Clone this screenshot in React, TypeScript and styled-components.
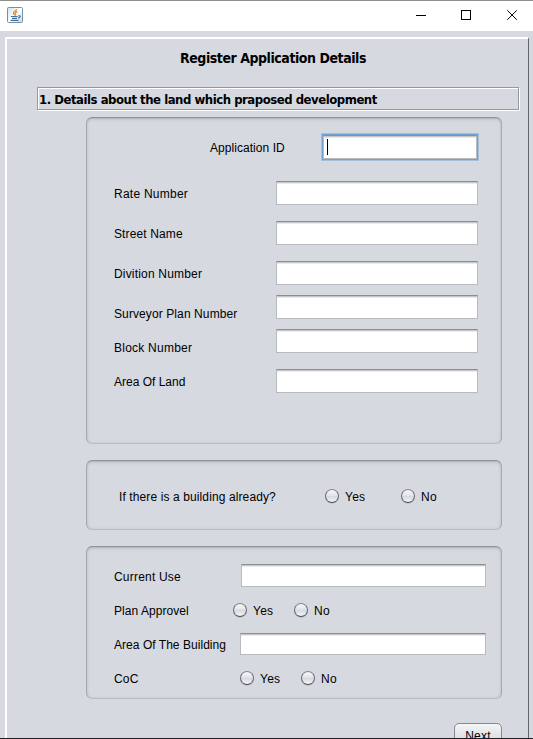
import React from "react";
import styled, { createGlobalStyle } from "styled-components";

const GlobalStyle = createGlobalStyle`
  * { box-sizing: border-box; }
  html, body { margin: 0; padding: 0; overflow: hidden; }
  body { background: #d6d9e0; }
`;

const Window = styled.div`
  width: 533px;
  height: 739px;
  display: flex;
  flex-direction: column;
  overflow: hidden;
  background: #d6d9e0;
  border-bottom: 1px solid #1c1e24;
  color: #000;
  font: 12px/14px "Liberation Sans", Arial, sans-serif;
`;

const TitleBar = styled.header`
  flex: none;
  height: 31px;
  display: flex;
  justify-content: space-between;
  background: #fff;
  border-top: 1px solid #8e8e8e;
  padding: 6px 0 0 7px;
`;

const Controls = styled.div`
  display: flex;
  gap: 35px;
  padding: 3px 15px 0 0;
  height: 14px;
`;

const Frame = styled.main`
  flex: none;
  width: 524px;
  height: 720px;
  margin: 6px 0 0 5px;
  border-top: 2px solid #fff;
  border-left: 2px solid #fff;
  border-right: 1px solid #63666c;
  display: flex;
  flex-direction: column;
`;

const Title = styled.h1`
  margin: 10px 0 0 173px;
  font: bold 14px/18px "DejaVu Sans Condensed", "DejaVu Sans", Tahoma, sans-serif;
  font-stretch: condensed;
  letter-spacing: -0.45px;
  white-space: nowrap;
`;

const SectionHeading = styled.h2`
  flex: none;
  width: 482px;
  height: 23px;
  margin: 20px 0 0 30px;
  padding: 3px 0 0 1px;
  border: 1px solid #95989d;
  box-shadow: 1px 1px 0 #fff, inset 1px 1px 0 #fff;
  font: bold 13px/17px "DejaVu Sans Condensed", "DejaVu Sans", Tahoma, sans-serif;
  font-stretch: condensed;
  letter-spacing: -0.47px;
  white-space: nowrap;
`;

const Panel = styled.section<{ $height: number; $gap: number; $pad: number }>`
  flex: none;
  width: 416px;
  height: ${(p) => p.$height}px;
  margin: ${(p) => p.$gap}px 0 0 79px;
  padding-top: ${(p) => p.$pad}px;
  border: 1px solid;
  border-color: #8f9298 #a6a9ae #b9bcc0 #a6a9ae;
  border-radius: 6px;
  box-shadow: inset 0 1px 1px #b4b7bc, inset 0 2px 3px #c6c9ce, inset 0 0 3px #c2c5ca;
`;

const Row = styled.div<{ $gap?: number; $height?: number; $indent?: number }>`
  display: flex;
  align-items: flex-start;
  height: ${(p) => p.$height ?? 24}px;
  margin-top: ${(p) => p.$gap ?? 0}px;
  padding-left: ${(p) => p.$indent ?? 27}px;
`;

const Label = styled.label<{ $width: number; $drop?: number; $track?: number }>`
  flex: none;
  width: ${(p) => p.$width}px;
  padding-top: ${(p) => p.$drop ?? 6}px;
  letter-spacing: ${(p) => p.$track ?? 0.2}px;
  white-space: nowrap;
`;

const Field = styled.input<{ $width: number; $height?: number }>`
  flex: none;
  width: ${(p) => p.$width}px;
  height: ${(p) => p.$height ?? 24}px;
  margin: 0;
  padding: 2px 2px;
  border: 1px solid;
  border-color: #8b8e93 #b7babe #b7babe;
  border-radius: 0;
  outline: none;
  background: linear-gradient(#c6c7ca 0 1px, #eaebec 1px 2px, #fff 2px);
  font: inherit;
`;

const FocusedField = styled.div`
  display: flex;
  width: 154px;
  height: 24px;
  margin-top: 1px;
  padding: 3px 0 0 3px;
  border: 1px solid;
  border-color: #8b8e93 #b7babe #b7babe;
  background: linear-gradient(#c6c7ca 0 1px, #eaebec 1px 2px, #fff 2px);
  box-shadow: 0 0 0 1px #73a4d1, 0 0 0 2px #a5bfdb;
`;

const Caret = styled.span`
  width: 1px;
  height: 16px;
  background: #000;
`;

const RadioOption = styled.label<{ $width: number }>`
  display: flex;
  align-items: flex-start;
  gap: 6px;
  width: ${(p) => p.$width}px;
  line-height: 16px;
  letter-spacing: 0.25px;
`;

const RadioDot = styled.span`
  width: 14px;
  height: 14px;
  border: 1px solid;
  border-color: #85888e #666970 #4b4e55;
  border-radius: 50%;
  background: linear-gradient(#f8f9fa, #e0e3e7 48%, #d5d9de 52%, #f4f5f7);
  box-shadow: 0 1px 0 #c3c6cb;
`;

const NextButton = styled.button`
  flex: none;
  display: flex;
  justify-content: center;
  align-items: flex-start;
  width: 48px;
  height: 26px;
  margin: 24px 0 0 447px;
  padding: 5px 0 0 0;
  border: 1px solid #85888d;
  border-radius: 5px;
  background: linear-gradient(#f4f5f6, #dfe2e6 50%, #d5d9de);
  font: 12px/14px "Liberation Sans", Arial, sans-serif;
  letter-spacing: 0.2px;
  color: #000;
`;

const JavaIcon = () => (
  <svg width="16" height="16" viewBox="0 0 16 16">
    <defs>
      <linearGradient id="tile" x1="0" y1="0" x2="1" y2="1">
        <stop offset="0" stopColor="#cfdfe9" />
        <stop offset="0.5" stopColor="#fff" />
        <stop offset="1" stopColor="#cbd9e3" />
      </linearGradient>
    </defs>
    <rect x=".5" y=".5" width="15" height="15" rx="1" fill="url(#tile)" stroke="#7590a3" />
    <path d="M9.5 2.2C9.7 4 6 4.7 6.3 6.3C6.4 7.1 7.5 7.6 7.6 8.3M10.5 4.6C8.5 5.3 7.5 6 8.5 7.1C9.1 7.8 8.7 8.2 8.4 8.5" fill="none" stroke="#ef8122" strokeWidth="1.2" />
    <path d="M4 9.5H10.6M5 11.3H10M3.6 13.3H11.6M11.2 9C14 8 13.8 10.7 11 11.2" fill="none" stroke="#44729a" strokeWidth="1.2" />
  </svg>
);

const MinimizeIcon = () => (
  <svg width="11" height="11" shapeRendering="crispEdges">
    <path d="M1 5.5H11" stroke="#000" />
  </svg>
);

const MaximizeIcon = () => (
  <svg width="11" height="11" shapeRendering="crispEdges">
    <rect x=".5" y=".5" width="9" height="9" fill="none" stroke="#000" />
  </svg>
);

const CloseIcon = () => (
  <svg width="11" height="11">
    <path d="M.3 .3L9.8 9.8M9.8 .3L.3 9.8" stroke="#000" />
  </svg>
);

const Radio = ({ text, width }: { text: string; width: number }) => (
  <RadioOption $width={width}>
    <RadioDot />
    {text}
  </RadioOption>
);

const landFields = [
  { label: "Rate Number", gap: 21, drop: 6, track: 0.25 },
  { label: "Street Name", gap: 16, drop: 6, track: 0.12 },
  { label: "Divition Number", gap: 16, drop: 6, track: 0.18 },
  { label: "Surveyor Plan Number", gap: 10, drop: 12, track: 0.1 },
  { label: "Block Number", gap: 10, drop: 12, track: 0.24 },
  { label: "Area Of Land", gap: 16, drop: 6, track: 0 },
];

export default function App() {
  return (
    <Window>
      <GlobalStyle />
      <TitleBar>
        <JavaIcon />
        <Controls>
          <MinimizeIcon />
          <MaximizeIcon />
          <CloseIcon />
        </Controls>
      </TitleBar>
      <Frame>
        <Title>Register Application Details</Title>
        <SectionHeading>1. Details about the land which praposed development</SectionHeading>

        <Panel $height={327} $gap={7} $pad={16}>
          <Row $height={26} $indent={123}>
            <Label $width={113} $drop={7} $track={0.05}>Application ID</Label>
            <FocusedField>
              <Caret />
            </FocusedField>
          </Row>
          {landFields.map((f) => (
            <Row key={f.label} $gap={f.gap}>
              <Label $width={162} $drop={f.drop} $track={f.track}>{f.label}</Label>
              <Field $width={202} />
            </Row>
          ))}
        </Panel>

        <Panel $height={70} $gap={16} $pad={28}>
          <Row $indent={32}>
            <Label $width={206} $drop={1} $track={0.11}>If there is a building already?</Label>
            <Radio text="Yes" width={76} />
            <Radio text="No" width={50} />
          </Row>
        </Panel>

        <Panel $height={153} $gap={16} $pad={17}>
          <Row $height={23}>
            <Label $width={127}>Current Use</Label>
            <Field $width={245} $height={23} />
          </Row>
          <Row $height={14} $gap={16}>
            <Label $width={119} $drop={1} $track={0.06}>Plan Approvel</Label>
            <Radio text="Yes" width={61} />
            <Radio text="No" width={50} />
          </Row>
          <Row $height={22} $gap={16}>
            <Label $width={126} $drop={5} $track={0.04}>Area Of The Building</Label>
            <Field $width={246} $height={22} />
          </Row>
          <Row $height={14} $gap={16}>
            <Label $width={126} $drop={1}>CoC</Label>
            <Radio text="Yes" width={61} />
            <Radio text="No" width={50} />
          </Row>
        </Panel>

        <NextButton>Next</NextButton>
      </Frame>
    </Window>
  );
}
